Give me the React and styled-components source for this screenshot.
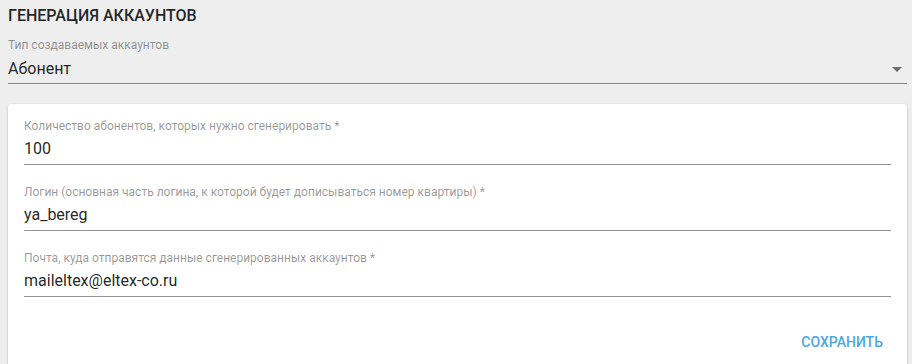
import React from "react";
import styled, { createGlobalStyle } from "styled-components";

const GlobalStyle = createGlobalStyle`
  html, body {
    margin: 0;
    padding: 0;
    background: #eeeeee;
    font-family: Roboto, "Noto Sans", "Liberation Sans", sans-serif;
  }
  * { box-sizing: border-box; }
`;

const Page = styled.div`
  padding: 6px 5px 0 8px;
  display: flex;
  flex-direction: column;
  height: 364px;
  overflow: hidden;
`;

const Title = styled.h1`
  margin: 0;
  font-size: 16px;
  line-height: 20px;
  font-weight: 500;
  color: rgba(0, 0, 0, 0.87);
  text-transform: uppercase;
`;

const Field = styled.div`
  display: flex;
  flex-direction: column;
  margin-top: ${(p) => p.$top || 0}px;
`;

const Label = styled.label`
  font-size: 12px;
  line-height: 16px;
  color: rgba(0, 0, 0, 0.42);
`;

const ValueRow = styled.div`
  display: flex;
  align-items: center;
  justify-content: space-between;
  margin-top: ${(p) => p.$gap}px;
  padding-bottom: ${(p) => p.$pad}px;
  border-bottom: 1px solid rgba(0, 0, 0, 0.42);
`;

const Value = styled.span`
  font-size: 16px;
  line-height: 24px;
  color: rgba(0, 0, 0, 0.87);
`;

const Arrow = styled.span`
  width: 0;
  height: 0;
  margin-right: 5px;
  border-left: 5px solid transparent;
  border-right: 5px solid transparent;
  border-top: 5px solid rgba(0, 0, 0, 0.54);
`;

const Card = styled.section`
  margin-top: 20px;
  background: #ffffff;
  border-radius: 4px;
  box-shadow: 0 1px 3px rgba(0, 0, 0, 0.2), 0 1px 1px rgba(0, 0, 0, 0.14),
    0 2px 1px -1px rgba(0, 0, 0, 0.12);
  padding: 14px 16px 40px 16px;
  display: flex;
  flex-direction: column;
  flex: 1 0 auto;
`;

const Actions = styled.div`
  display: flex;
  justify-content: flex-end;
  margin-top: 27px;
`;

const Button = styled.button`
  border: 0;
  background: transparent;
  padding: 6px 8px;
  font-family: inherit;
  font-size: 14px;
  line-height: 24.5px;
  font-weight: 500;
  text-transform: uppercase;
  color: #4aa7e6;
  cursor: pointer;
`;

const fields = [
  {
    label: "Количество абонентов, которых нужно сгенерировать *",
    value: "100",
  },
  {
    label:
      "Логин (основная часть логина, к которой будет дописываться номер квартиры) *",
    value: "ya_bereg",
  },
  {
    label: "Почта, куда отправятся данные сгенерированных аккаунтов *",
    value: "maileltex@eltex-co.ru",
  },
];

export default function App() {
  return (
    <>
      <GlobalStyle />
      <Page>
        <Title>Генерация аккаунтов</Title>
        <Field $top={11}>
          <Label>Тип создаваемых аккаунтов</Label>
          <ValueRow $gap={4} $pad={2}>
            <Value>Абонент</Value>
            <Arrow />
          </ValueRow>
        </Field>
        <Card>
          {fields.map((f, i) => (
            <Field key={f.label} $top={i === 0 ? 0 : 19}>
              <Label>{f.label}</Label>
              <ValueRow $gap={3} $pad={3}>
                <Value>{f.value}</Value>
              </ValueRow>
            </Field>
          ))}
          <Actions>
            <Button>Сохранить</Button>
          </Actions>
        </Card>
      </Page>
    </>
  );
}
